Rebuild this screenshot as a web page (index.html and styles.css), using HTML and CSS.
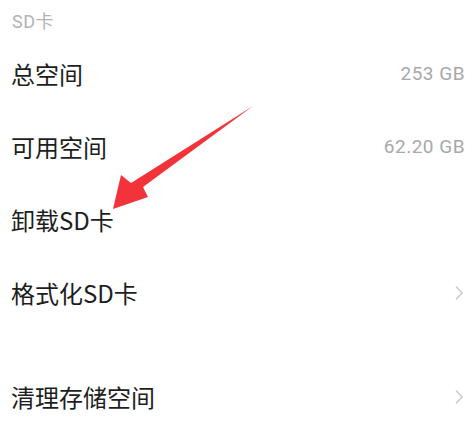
FILE: index.html
```html
<!DOCTYPE html>
<html lang="zh-CN">
<head>
<meta charset="utf-8">
<link rel="stylesheet" href="styles.css">
</head>
<body>
<div class="page">
  <div class="section-title">SD卡</div>
  <div class="row"><span class="label">总空间</span><span class="value">253 GB</span></div>
  <div class="row"><span class="label">可用空间</span><span class="value">62.20 GB</span></div>
  <div class="row"><span class="label">卸载SD卡</span></div>
  <div class="row"><span class="label">格式化SD卡</span><svg class="chev" width="10" height="16" viewBox="0 0 10 16"><path d="M2 1.5 L8 8 L2 14.5" fill="none" stroke="#cccccc" stroke-width="1.6"/></svg></div>
  <div class="spacer"></div>
  <div class="row"><span class="label">清理存储空间</span><svg class="chev" width="10" height="16" viewBox="0 0 10 16"><path d="M2 1.5 L8 8 L2 14.5" fill="none" stroke="#cccccc" stroke-width="1.6"/></svg></div>
  <svg class="arrow" width="473" height="423" viewBox="0 0 473 423">
    <path d="M253 106 L143 187 L148 197 L113 209 L121 175 L131 183 Z" fill="#f2343a"/>
  </svg>
</div>
</body>
</html>
```
FILE: styles.css
```css
html, body {
  margin: 0;
  padding: 0;
  background: #ffffff;
}
.page {
  position: relative;
  width: 473px;
  height: 423px;
  overflow: hidden;
  font-family: Roboto, "Noto Sans CJK SC", sans-serif;
}
.section-title {
  height: 37px;
  box-sizing: border-box;
  padding: 10px 0 0 12px;
  font-size: 18px;
  line-height: 24px;
  color: #b3b3b3;
  letter-spacing: 0.5px;
}
.row {
  height: 73px;
  display: flex;
  align-items: center;
  justify-content: space-between;
  padding: 0 9px 0 11px;
}
.label {
  font-family: "Noto Sans CJK SC", sans-serif;
  font-size: 24px;
  color: #1e1e1e;
}
.value {
  font-size: 19px;
  letter-spacing: 0.5px;
  color: #a8a8a8;
  margin-right: -1px;
}
.chev {
  display: block;
}
.spacer {
  height: 31px;
}
.arrow {
  position: absolute;
  left: 0;
  top: 0;
  pointer-events: none;
}
```
